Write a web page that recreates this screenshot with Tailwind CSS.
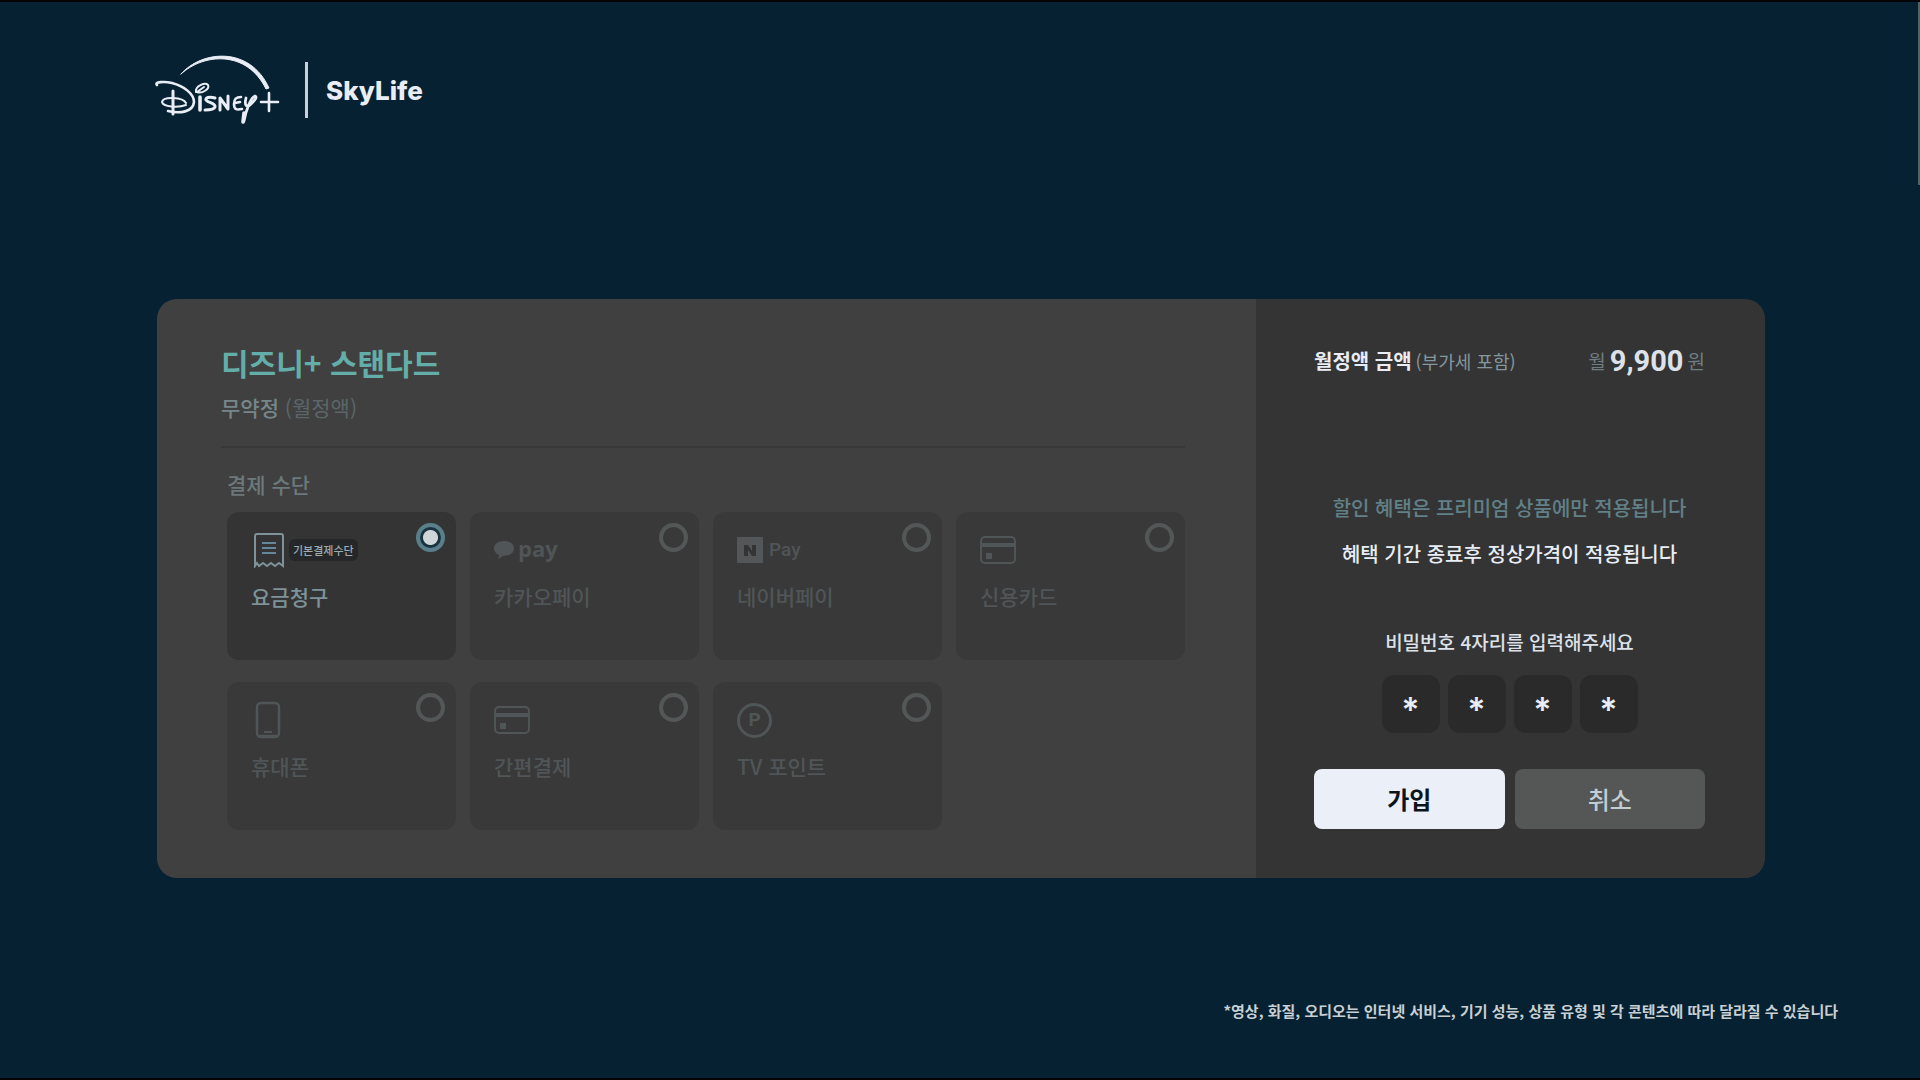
<!DOCTYPE html>
<html lang="ko">
<head>
    <meta charset="UTF-8" />
    <meta name="viewport" content="width=device-width, initial-scale=1.0" />
    <title>디즈니+ 스탠다드 가입</title>
    <script src="https://cdn.jsdelivr.net/npm/@tailwindcss/browser@4"></script>
</head>
<body class="relative min-h-screen flex flex-col bg-[#062131] border-t-2 border-b-2 border-[#010508] font-['Noto_Sans_CJK_KR',sans-serif] text-[#e9edf6]">
    <!-- Scroll thumb -->
    <div class="absolute top-0 right-0 w-0.5 h-[183px] bg-[#506466]"></div>

    <!-- Logos -->
    <header class="flex items-center px-38 pt-12">
        <svg class="w-32 h-20" viewBox="0 0 128 80" fill="none" stroke="#e9edf6" stroke-linecap="round" stroke-linejoin="round" role="img" aria-label="Disney+">
            <path d="M29 24 C50 0 98 -4 117 38 L114 39 C95 0 52 3 29 24 Z" fill="#e9edf6" stroke-width="1" />
            <path d="M5 35 C2 32 12 31 20 33 C32 36 42 44 42 52 C41 62 28 64 16 61" stroke-width="2.600" />
            <path d="M21 41 V64" stroke-width="3" />
            <path d="M34 53 C31 47 11 46 10 52 C11 57 26 58 34 55" stroke-width="2" />
            <path d="M48 47 V60" stroke-width="3.600" />
            <path d="M44 42 C43 36 53 32 56 35 C58 39 50 44 45 42 L52 37" stroke-width="2" />
            <path d="M63 48 C57 46 53 48 54 50 C56 53 64 53 63 57 C62 60 57 60 53 60" stroke-width="3" />
            <path d="M68 60 V48 L76 59 V46" stroke-width="3" />
            <path d="M89 47 C83 47 82 50 82 54 C82 60 85 60 90 59 M83 53 L88 52" stroke-width="2.600" />
            <path d="M94 48 C92 56 95 58 99 54 C102 51 106 47 103 46 C99 47 94 60 92 71" stroke-width="2.800" />
            <path d="M92 63 L91 72" stroke-width="3.600" />
            <path d="M109 52 H126 M117 43 V61" stroke-width="2.600" />
        </svg>
        <span class="ml-[25px] w-[3px] h-14 bg-[#c9d0d8]"></span>
        <span class="ml-[18px] pt-0.5 font-['Inter',sans-serif] font-extrabold text-[26px] leading-8">SkyLife</span>
    </header>

    <main class="mt-[169px] mr-[155px] ml-[157px] flex rounded-[20px] overflow-hidden">
        <!-- Product and payment method -->
        <section class="grow bg-[#404040] pt-[43px] pr-[71px] pb-12 pl-16">
            <h1 class="font-bold text-[30px] leading-10 text-[#63aea9]">디즈니+ 스탠다드</h1>
            <p class="mt-1.5 pb-5 border-b-2 border-[#383838] text-[21px] leading-[38px] text-[#5b6669]"><span class="font-medium text-[#76868a]">무약정</span> (월정액)</p>

            <fieldset class="mt-[18px] pl-1.5">
                <legend class="mb-2.5 text-[21px] leading-9 font-medium text-[#6b797c]">결제 수단</legend>
                <div class="grid grid-cols-4 gap-x-3.5 gap-y-[22px]">
                    <label class="relative h-[148px] rounded-xl bg-[#343434] pt-4 pl-6 text-[21px] font-medium text-[#7d9299]">
                        <span class="flex h-11 items-center">
                            <svg class="ml-0.5 w-8 h-9" viewBox="0 0 32 36" fill="none" stroke="currentColor" stroke-width="2">
                                <path d="M2 34 V4 Q2 2 4 2 H28 Q30 2 30 4 V34 L26 31 L22 34 L18 31 L14 34 L10 31 L6 34 L4 31 Z" />
                                <path d="M9 11 H23 M9 16 H23 M9 21 H23" stroke="#66879a" />
                            </svg>
                            <span class="ml-1 h-[22px] rounded-md bg-[#252728] px-1 text-[11px] leading-[22px] text-[#9cacb2]">기본결제수단</span>
                        </span>
                        <span class="mt-1.5 block leading-9">요금청구</span>
                        <input type="radio" name="payment" checked class="absolute top-[11px] right-[11px] size-[29px] appearance-none rounded-full border-4 border-[#5b7f8a] bg-[radial-gradient(circle,#cfd5d8_7px,#183440_8px)]" />
                    </label>
                    <label class="relative h-[148px] rounded-xl bg-[#393939] pt-4 pl-6 text-[21px] font-medium text-[#505557]">
                        <span class="flex h-11 items-center">
                            <svg class="w-5 h-[18px]" viewBox="0 0 20 18" fill="currentColor">
                                <path d="M10 0 C4 0 0 3 0 7.500 C0 10 2 13 5 14 L4 18 L9 15 C16 15 20 12 20 7.500 C20 3 16 0 10 0 Z" />
                            </svg>
                            <span class="ml-1 pb-1 font-['Open_Sans',sans-serif] font-bold text-[22px] leading-8">pay</span>
                        </span>
                        <span class="mt-1.5 block leading-9">카카오페이</span>
                        <input type="radio" name="payment" class="absolute top-[11px] right-[11px] size-[29px] appearance-none rounded-full border-4 border-[#545757]" />
                    </label>
                    <label class="relative h-[148px] rounded-xl bg-[#393939] pt-4 pl-6 text-[21px] font-medium text-[#505557]">
                        <span class="flex h-11 items-center">
                            <svg class="w-[26px] h-[26px]" viewBox="0 0 26 26">
                                <rect width="26" height="26" rx="1" fill="#545759" />
                                <path d="M7 8 H11 L15 14 V8 H19 V19 H15 L11 13 V19 H7 Z" fill="#343434" />
                            </svg>
                            <span class="ml-1.5 font-['Roboto',sans-serif] font-medium text-[19px] leading-8">Pay</span>
                        </span>
                        <span class="mt-1.5 block leading-9">네이버페이</span>
                        <input type="radio" name="payment" class="absolute top-[11px] right-[11px] size-[29px] appearance-none rounded-full border-4 border-[#545757]" />
                    </label>
                    <label class="relative h-[148px] rounded-xl bg-[#393939] pt-4 pl-6 text-[21px] font-medium text-[#505557]">
                        <span class="flex h-11 items-center">
                            <svg class="w-9 h-7" viewBox="0 0 36 28" fill="none" stroke="currentColor" stroke-width="2">
                                <rect x="1" y="1" width="34" height="26" rx="4" />
                                <path d="M1 9 H35" stroke-width="4" />
                                <rect x="7" y="18" width="4" height="4" fill="currentColor" />
                            </svg>
                        </span>
                        <span class="mt-1.5 block leading-9">신용카드</span>
                        <input type="radio" name="payment" class="absolute top-[11px] right-[11px] size-[29px] appearance-none rounded-full border-4 border-[#545757]" />
                    </label>
                    <label class="relative h-[148px] rounded-xl bg-[#393939] pt-4 pl-6 text-[21px] font-medium text-[#505557]">
                        <span class="flex h-11 items-center">
                            <svg class="ml-1 w-[26px] h-[38px]" viewBox="0 0 26 38" fill="none" stroke="currentColor" stroke-width="2.500">
                                <rect x="2" y="2" width="22" height="34" rx="4" />
                                <path d="M4 35 H22" />
                                <path d="M9 31 H17" stroke-width="2" />
                            </svg>
                        </span>
                        <span class="mt-1.5 block leading-9">휴대폰</span>
                        <input type="radio" name="payment" class="absolute top-[11px] right-[11px] size-[29px] appearance-none rounded-full border-4 border-[#545757]" />
                    </label>
                    <label class="relative h-[148px] rounded-xl bg-[#393939] pt-4 pl-6 text-[21px] font-medium text-[#505557]">
                        <span class="flex h-11 items-center">
                            <svg class="w-9 h-7" viewBox="0 0 36 28" fill="none" stroke="currentColor" stroke-width="2">
                                <rect x="1" y="1" width="34" height="26" rx="4" />
                                <path d="M1 9 H35" stroke-width="4" />
                                <rect x="7" y="18" width="4" height="4" fill="currentColor" />
                            </svg>
                        </span>
                        <span class="mt-1.5 block leading-9">간편결제</span>
                        <input type="radio" name="payment" class="absolute top-[11px] right-[11px] size-[29px] appearance-none rounded-full border-4 border-[#545757]" />
                    </label>
                    <label class="relative h-[148px] rounded-xl bg-[#393939] pt-4 pl-6 text-[21px] font-medium text-[#505557]">
                        <span class="flex h-11 items-center">
                            <span class="flex size-[35px] items-center justify-center rounded-full border-3 border-[#505557] font-['Roboto',sans-serif] font-bold text-[19px] leading-6">P</span>
                        </span>
                        <span class="mt-1.5 block leading-9">TV 포인트</span>
                        <input type="radio" name="payment" class="absolute top-[11px] right-[11px] size-[29px] appearance-none rounded-full border-4 border-[#545757]" />
                    </label>
                </div>
            </fieldset>
        </section>

        <!-- Price and PIN -->
        <form class="w-[509px] shrink-0 flex flex-col bg-[#343434] pt-[42px] pr-[60px] pb-12 pl-[58px]">
            <div class="flex items-center justify-between leading-10">
                <p class="text-[18px] text-[#84979d]"><strong class="mr-1 font-bold text-[20px] text-[#e9edf6]">월정액 금액</strong>(부가세 포함)</p>
                <p class="flex items-center gap-1 text-[19px] text-[#6f7c80]">월<strong class="font-['Roboto',sans-serif] font-bold text-[29px] text-[#dde2ea]">9,900</strong>원</p>
            </div>
            <p class="mt-[104px] text-center text-[20px] leading-[46px] font-medium text-[#618087]">할인 혜택은 프리미엄 상품에만 적용됩니다</p>
            <p class="text-center text-[20px] leading-[46px] font-medium">혜택 기간 종료후 정상가격이 적용됩니다</p>

            <fieldset class="mt-[50px]">
                <legend class="mx-auto text-[19px] leading-[30px] font-medium text-[#dde2ea]">비밀번호 4자리를 입력해주세요</legend>
                <div class="mt-[18px] flex justify-center gap-2">
                    <input type="text" maxlength="1" value="*" aria-label="비밀번호 첫째 자리" class="size-[58px] rounded-xl bg-[#2a2a2a] pt-2.5 text-center font-['Inter',sans-serif] font-semibold text-[34px]" />
                    <input type="text" maxlength="1" value="*" aria-label="비밀번호 둘째 자리" class="size-[58px] rounded-xl bg-[#2a2a2a] pt-2.5 text-center font-['Inter',sans-serif] font-semibold text-[34px]" />
                    <input type="text" maxlength="1" value="*" aria-label="비밀번호 셋째 자리" class="size-[58px] rounded-xl bg-[#2a2a2a] pt-2.5 text-center font-['Inter',sans-serif] font-semibold text-[34px]" />
                    <input type="text" maxlength="1" value="*" aria-label="비밀번호 넷째 자리" class="size-[58px] rounded-xl bg-[#2a2a2a] pt-2.5 text-center font-['Inter',sans-serif] font-semibold text-[34px]" />
                </div>
            </fieldset>
            <div class="mt-9 grid grid-cols-2 gap-2.5 text-[24px] leading-9">
                <button type="submit" class="h-[60px] rounded-lg bg-[#ebeff8] font-bold text-[#0b1418]">가입</button>
                <button type="button" class="h-[60px] rounded-lg bg-[#555757] font-medium text-[#c3ced3]">취소</button>
            </div>
        </form>
    </main>

    <footer class="mt-auto pr-[82px] pb-[55px] text-right font-bold text-[15px] leading-6 text-[#c9d0d4]">*영상, 화질, 오디오는 인터넷 서비스, 기기 성능, 상품 유형 및 각 콘텐츠에 따라 달라질 수 있습니다</footer>
</body>
</html>
